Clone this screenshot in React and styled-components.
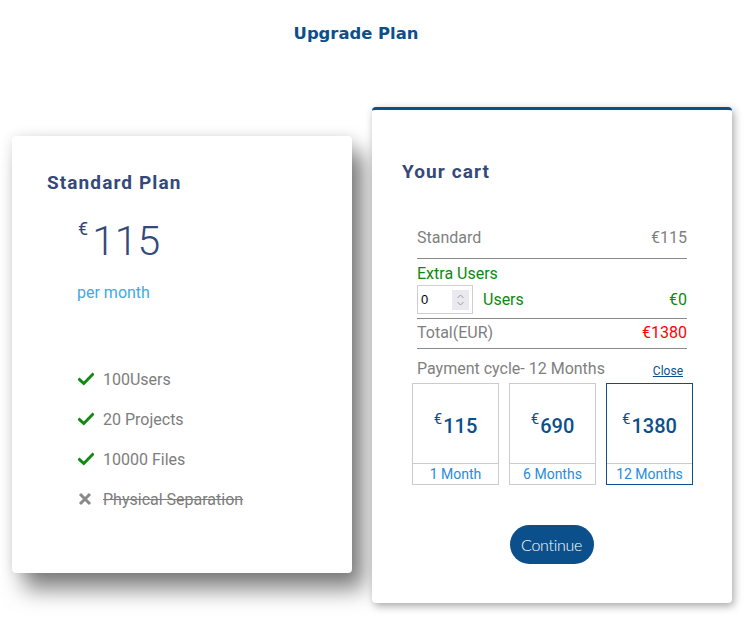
import React from "react";
import styled, { createGlobalStyle } from "styled-components";

const Global = createGlobalStyle`
  html, body { margin: 0; padding: 0; background: #fff; }
  body { font-family: Roboto, "Liberation Sans", sans-serif; }
  * { box-sizing: border-box; }
`;

const Page = styled.div`
  width: 749px;
  min-height: 635px;
  padding-top: 22px;
`;

const Title = styled.h1`
  margin: 0;
  text-align: center;
  font-family: "DejaVu Sans", sans-serif;
  font-size: 16.4px;
  font-weight: bold;
  color: #0b4f8b;
  line-height: 24px;
  padding-right: 37px;
`;

const Row = styled.div`
  display: flex;
  align-items: flex-start;
  gap: 20px;
  padding-left: 12px;
  margin-top: 61px;
`;

const PlanCard = styled.div`
  position: relative;
  width: 340px;
  height: 437px;
  margin-top: 29px;
  background: #fff;
  border-radius: 4px;
  padding: 35px 0 0 35px;
  box-shadow: 12px 16px 22px rgba(0, 0, 0, 0.5), 0 0 12px rgba(0, 0, 0, 0.1);
`;

const CardTitle = styled.h2`
  margin: 0;
  font-family: Roboto, sans-serif;
  font-size: 19px;
  font-weight: 700;
  letter-spacing: 1.1px;
  color: #34497a;
  line-height: 24px;
`;

const Price = styled.div`
  display: flex;
  align-items: flex-start;
  margin: 22px 0 0 31px;
  color: #34497a;
`;

const Euro = styled.span`
  font-size: 18px;
  line-height: 20px;
  margin-top: 2px;
  margin-right: 4px;
`;

const Amount = styled.span`
  font-size: 41px;
  font-weight: 300;
  line-height: 48px;
`;

const PerMonth = styled.div`
  margin: 18px 0 0 30px;
  font-size: 16px;
  color: #3eaae3;
  line-height: 20px;
`;

const Features = styled.ul`
  list-style: none;
  margin: 66px 0 0 31px;
  padding: 0;
  display: flex;
  flex-direction: column;
  gap: 20px;
`;

const Feature = styled.li`
  display: flex;
  align-items: center;
  height: 20px;
  font-size: 16px;
  color: #7d7d7d;
  text-decoration: ${(p) => (p.$off ? "line-through" : "none")};
`;

const IconBox = styled.span`
  width: 25px;
  display: inline-flex;
  align-items: center;
`;

const Check = () => (
  <svg width="16" height="14" viewBox="0 0 16 14">
    <path d="M1.5 7.5 L5.8 11.5 L14.5 2.5" fill="none" stroke="#108a10" strokeWidth="3" strokeLinecap="square" />
  </svg>
);

const Cross = () => (
  <svg width="14" height="14" viewBox="0 0 14 14">
    <path d="M2 2 L12 12 M12 2 L2 12" fill="none" stroke="#8a8a8a" strokeWidth="3" />
  </svg>
);

const CartCard = styled.div`
  position: relative;
  width: 360px;
  height: 496px;
  background: #fff;
  border-top: 3px solid #0b4f8b;
  border-radius: 4px;
  padding: 50px 39px 0 40px;
  box-shadow: 2px 3px 8px rgba(0, 0, 0, 0.35);
`;

const CartTitle = styled(CardTitle)`
  margin-left: -10px;
`;

const Lines = styled.div`
  margin: 44px 6px 0 5px;
`;

const Line = styled.div`
  display: flex;
  justify-content: space-between;
  align-items: center;
  font-size: 16px;
  line-height: 20px;
  color: ${(p) => p.$color || "#7f7f7f"};
  border-bottom: ${(p) => (p.$rule ? "1px solid #8a8a8a" : "none")};
  padding-bottom: ${(p) => p.$pb || 0}px;
  margin-top: ${(p) => p.$mt || 0}px;
`;

const Value = styled.span`
  color: ${(p) => p.$color || "inherit"};
`;

const UsersLeft = styled.span`
  display: flex;
  align-items: center;
  gap: 10px;
`;

const NumberInput = styled.div`
  width: 56px;
  height: 29px;
  border: 1px solid #cfcfcf;
  display: flex;
  align-items: center;
  justify-content: space-between;
  padding: 0 3px 0 3px;
  font-family: "Liberation Sans", Arial, sans-serif;
  font-size: 13px;
  color: #000;
`;

const Spinner = styled.span`
  width: 17px;
  height: 20px;
  background: #e9e9ef;
  display: flex;
  align-items: center;
  justify-content: center;
`;

const PaymentHead = styled.div`
  display: flex;
  justify-content: space-between;
  align-items: flex-end;
  margin: 10px 10px 4px 5px;
  font-size: 16px;
  color: #7f7f7f;
  line-height: 20px;
`;

const CloseLink = styled.a`
  font-size: 12px;
  color: #0b4f8b;
  text-decoration: underline;
  line-height: 16px;
`;

const Cycles = styled.div`
  display: flex;
  gap: 10px;
`;

const Cycle = styled.div`
  width: 87px;
  height: 102px;
  border: 1px solid ${(p) => (p.$active ? "#0b4f8b" : "#cccccc")};
  display: flex;
  flex-direction: column;
`;

const CyclePrice = styled.div`
  flex: 1;
  display: flex;
  justify-content: center;
  align-items: center;
  border-bottom: 1px solid #cccccc;
  color: #0b4f8b;
  font-size: 20px;
  font-weight: 500;
  padding-top: 4px;
`;

const Sup = styled.sup`
  font-size: 15px;
  font-weight: 400;
  vertical-align: top;
  position: relative;
  top: -7px;
  margin-right: 1px;
`;

const CycleLabel = styled.div`
  height: 20px;
  text-align: center;
  font-size: 14px;
  line-height: 20px;
  color: #2a8bd9;
`;

const ButtonRow = styled.div`
  display: flex;
  justify-content: center;
  margin-top: 40px;
  padding-right: 2px;
`;

const Button = styled.button`
  width: 84px;
  height: 39px;
  border: none;
  border-radius: 20px;
  background: #0b4f8b;
  color: #fff;
  font-family: Lato, sans-serif;
  font-weight: 300;
  font-size: 16px;
  letter-spacing: -0.3px;
  padding: 0;
`;

const cycles = [
  { price: 115, label: "1 Month" },
  { price: 690, label: "6 Months" },
  { price: 1380, label: "12 Months", active: true },
];

export default function App() {
  return (
    <Page>
      <Global />
      <Title>Upgrade Plan</Title>
      <Row>
        <PlanCard>
          <CardTitle>Standard Plan</CardTitle>
          <Price>
            <Euro>€</Euro>
            <Amount>115</Amount>
          </Price>
          <PerMonth>per month</PerMonth>
          <Features>
            <Feature><IconBox><Check /></IconBox>100Users</Feature>
            <Feature><IconBox><Check /></IconBox>20 Projects</Feature>
            <Feature><IconBox><Check /></IconBox>10000 Files</Feature>
            <Feature $off><IconBox><Cross /></IconBox>Physical Separation</Feature>
          </Features>
        </PlanCard>
        <CartCard>
          <CartTitle>Your cart</CartTitle>
          <Lines>
            <Line $rule $pb={10}>
              <span>Standard</span>
              <Value>€115</Value>
            </Line>
            <Line $color="#0d8a0d" $mt={5}>
              <span>Extra Users</span>
            </Line>
            <Line $color="#0d8a0d" $rule $pb={4} $mt={1}>
              <UsersLeft>
                <NumberInput>
                  0
                  <Spinner>
                    <svg width="9" height="14" viewBox="0 0 9 14">
                      <path d="M1.5 5 L4.5 2 L7.5 5 M1.5 9 L4.5 12 L7.5 9" fill="none" stroke="#9a9aa0" strokeWidth="1" />
                    </svg>
                  </Spinner>
                </NumberInput>
                Users
              </UsersLeft>
              <Value>€0</Value>
            </Line>
            <Line $rule $pb={5} $mt={4}>
              <span>Total(EUR)</span>
              <Value $color="#f00">€1380</Value>
            </Line>
          </Lines>
          <PaymentHead>
            <span>Payment cycle- 12 Months</span>
            <CloseLink>Close</CloseLink>
          </PaymentHead>
          <Cycles>
            {cycles.map((c) => (
              <Cycle key={c.label} $active={c.active}>
                <CyclePrice>
                  <Sup>€</Sup>
                  {c.price}
                </CyclePrice>
                <CycleLabel>{c.label}</CycleLabel>
              </Cycle>
            ))}
          </Cycles>
          <ButtonRow>
            <Button>Continue</Button>
          </ButtonRow>
        </CartCard>
      </Row>
    </Page>
  );
}
